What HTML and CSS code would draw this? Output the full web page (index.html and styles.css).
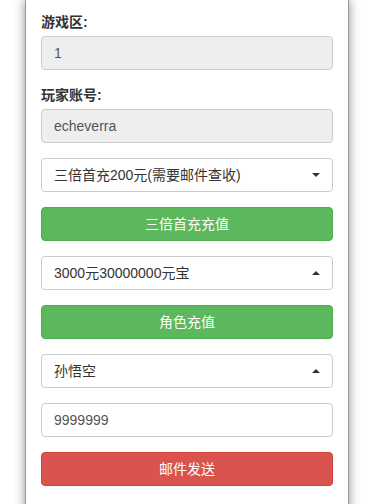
FILE: index.html
```html
<!DOCTYPE html>
<html lang="zh-CN">
<head>
  <meta charset="UTF-8">
  <meta name="viewport" content="width=device-width, initial-scale=1.0">
  <title>游戏充值</title>
  <link rel="stylesheet" href="styles.css">
</head>
<body>
<div id="panel">
  <div class="form-group">
    <label for="zone">游戏区:</label>
    <input class="form-control" type="text" id="zone" value="1" disabled>
  </div>

  <div class="form-group">
    <label for="account">玩家账号:</label>
    <input class="form-control" type="text" id="account" value="echeverra" disabled>
  </div>

  <div class="form-group">
    <div class="select down">三倍首充200元(需要邮件查收)</div>
  </div>
  <div class="form-group">
    <button class="btn btn-green">三倍首充充值</button>
  </div>

  <div class="form-group">
    <div class="select up">3000元30000000元宝</div>
  </div>
  <div class="form-group">
    <button class="btn btn-green">角色充值</button>
  </div>

  <div class="form-group">
    <div class="select up">孙悟空</div>
  </div>
  <div class="form-group">
    <input class="form-control" type="text" id="amount" value="9999999">
  </div>
  <div class="form-group">
    <button class="btn btn-red">邮件发送</button>
  </div>
</div>
</body>
</html>
```

FILE: styles.css
```css
body {
  margin: 0;
  background-color: #fff;
  font-family: "Liberation Sans", Arial, "Noto Sans CJK SC", sans-serif;
  font-size: 14px;
  line-height: 20px;
  color: #333;
}

#panel {
  width: 292px;
  margin: 0 0 0 25px;
  padding: 12px 15px 40px;
  background-color: #fff;
  border-left: 1px solid #999;
  border-right: 1px solid #999;
  box-shadow: 0 0 10px rgba(0, 0, 0, 0.45);
}

.form-group {
  margin-bottom: 15px;
}

label {
  display: block;
  margin-bottom: 4px;
  font-weight: bold;
}

.form-control,
.select {
  display: block;
  width: 100%;
  height: 34px;
  padding: 6px 12px;
  box-sizing: border-box;
  border: 1px solid #ccc;
  border-radius: 4px;
  background-color: #fff;
  font-family: inherit;
  font-size: 14px;
  line-height: 20px;
  color: #555;
}

.form-control:disabled {
  background-color: #eee;
  color: #555;
}

.select {
  position: relative;
  color: #333;
}

.select::after {
  content: "";
  position: absolute;
  right: 12px;
  top: 14px;
  border-left: 4px solid transparent;
  border-right: 4px solid transparent;
}

.select.down::after {
  border-top: 4px solid #333;
}

.select.up::after {
  border-bottom: 4px solid #333;
}

.btn {
  display: block;
  width: 100%;
  height: 34px;
  padding: 6px 12px;
  border: 1px solid transparent;
  border-radius: 4px;
  font-family: inherit;
  font-size: 14px;
  line-height: 20px;
  color: #fff;
  text-align: center;
  cursor: pointer;
}

.btn-green {
  background-color: #5cb85c;
  border-color: #4cae4c;
}

.btn-red {
  background-color: #d9534f;
  border-color: #d43f3a;
}
```
